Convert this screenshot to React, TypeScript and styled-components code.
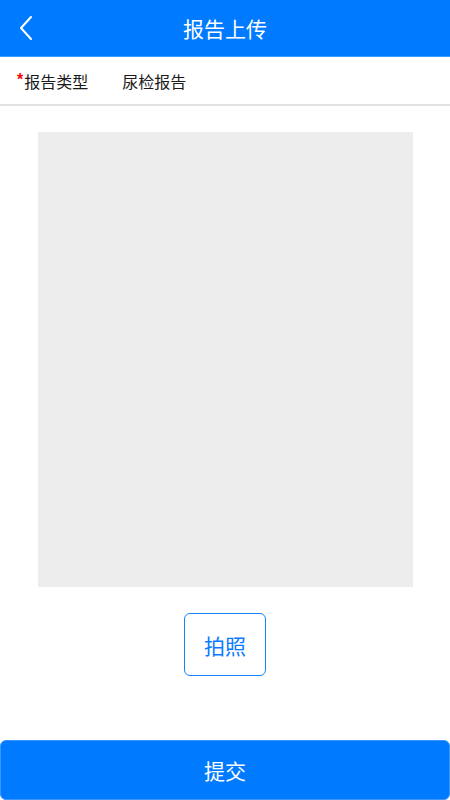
import React from 'react';
import styled, { createGlobalStyle } from 'styled-components';

const GlobalStyle = createGlobalStyle`
  html, body {
    margin: 0;
    padding: 0;
    background: #ffffff;
    font-family: "Noto Sans CJK SC", "Noto Sans", sans-serif;
  }
  * { box-sizing: border-box; }
`;

const Page = styled.div`
  width: 450px;
  height: 800px;
  display: flex;
  flex-direction: column;
  background: #ffffff;
`;

const Header = styled.div`
  height: 57px;
  background: #007aff;
  border-bottom: 1px solid #3d9bff;
  display: grid;
  grid-template-columns: 60px 1fr 60px;
  align-items: center;
`;

const BackButton = styled.div`
  display: flex;
  align-items: center;
  padding-left: 18px;
  height: 100%;
`;

const Title = styled.div`
  text-align: center;
  color: #ffffff;
  font-size: 21px;
  line-height: 1;
`;

const FieldRow = styled.div`
  height: 49px;
  display: flex;
  align-items: center;
  padding-left: 17px;
  border-bottom: 2px solid #e2e2e2;
  font-size: 16px;
  color: #1a1a1a;
  gap: 34px;
`;

const Label = styled.span`
  display: inline-flex;
  align-items: flex-start;
`;

const Required = styled.span`
  color: #ff0000;
  font-family: "Liberation Sans", sans-serif;
  font-size: 16px;
  font-weight: bold;
  line-height: 1;
  margin-top: 3px;
  margin-right: 1px;
`;

const Content = styled.div`
  flex: 1;
  display: flex;
  flex-direction: column;
  align-items: center;
  padding-top: 26px;
`;

const Preview = styled.div`
  width: 375px;
  height: 455px;
  background: #ededed;
`;

const PhotoButton = styled.button`
  margin-top: 26px;
  width: 82px;
  height: 63px;
  border: 1.5px solid #1682ff;
  border-radius: 6px;
  background: #ffffff;
  color: #0a7aff;
  font-family: inherit;
  font-size: 21px;
  padding: 0;
`;

const SubmitButton = styled.button`
  height: 60px;
  width: 100%;
  border: 1px solid #3a95ff;
  border-radius: 6px;
  background: #007aff;
  color: #ffffff;
  font-family: inherit;
  font-size: 21px;
  padding: 0;
`;

export default function App() {
  return (
    <Page>
      <GlobalStyle />
      <Header>
        <BackButton>
          <svg width="16" height="26" viewBox="0 0 16 26">
            <path d="M13 2 L3 13 L13 24" fill="none" stroke="#ffffff" strokeWidth="2" strokeLinecap="round" strokeLinejoin="round" />
          </svg>
        </BackButton>
        <Title>报告上传</Title>
        <div />
      </Header>
      <FieldRow>
        <Label>
          <Required>*</Required>报告类型
        </Label>
        <span>尿检报告</span>
      </FieldRow>
      <Content>
        <Preview />
        <PhotoButton>拍照</PhotoButton>
      </Content>
      <SubmitButton>提交</SubmitButton>
    </Page>
  );
}
